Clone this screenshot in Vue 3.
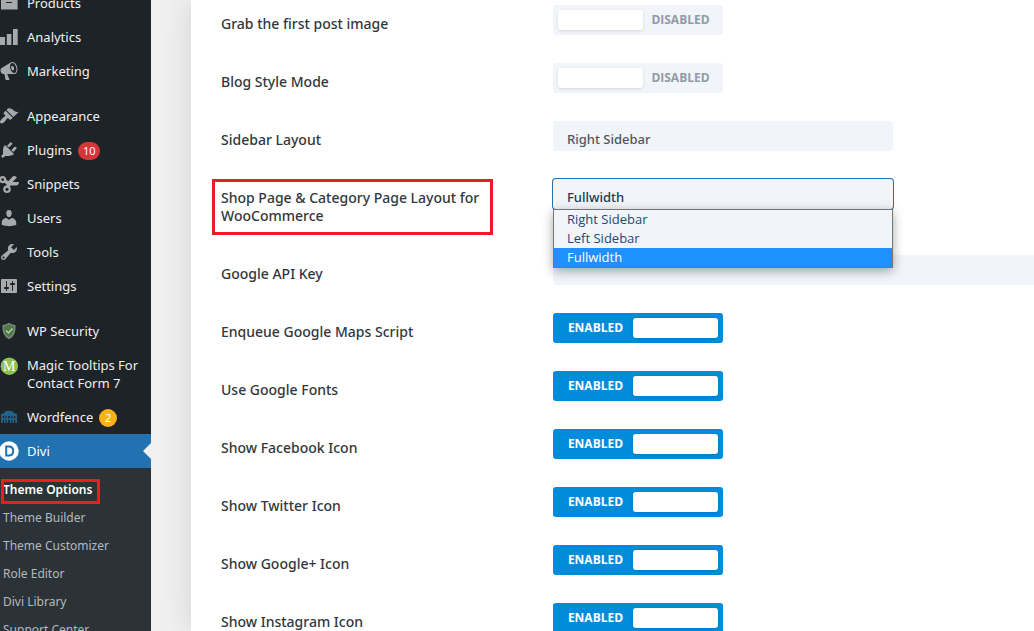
<script setup>
import { ref, reactive } from 'vue'

const icons = {
  products: 'M19 2v4H1V2h18zM2 6h16.600v10.500H2V6zm11 4V9H7v1h6z',
  analytics: 'M18.700 18V2h-4.700v16zM12.400 18V7H7.800v11zM6 18v-8H1v8z',
  marketing: 'M18.150 5.940c.46 1.620.38 3.220-.02 4.480-.42 1.280-1.260 2.180-2.300 2.480-.16.06-.26.06-.4.06-.06.02-.12.02-.18.02-.06.02-.14.02-.22.02h-6.800l2.220 5.500c.02.14-.06.26-.14.34-.08.1-.24.16-.34.16H6.950c-.1 0-.26-.06-.34-.16-.08-.08-.16-.2-.14-.34l-1-5.500H4.250l-.02-.02c-.5.06-1.080-.18-1.540-.62s-.88-1.080-1.060-1.880c-.24-.8-.2-1.560-.02-2.200.18-.62.58-1.080 1.060-1.300l.02-.02 9-5.400c.1-.06.18-.1.24-.16.06-.04.14-.08.24-.12.16-.08.28-.12.5-.18 1.040-.3 2.240.1 3.220.98s1.840 2.240 2.260 3.860zm-2.580 5.980h-.02c.4-.1.74-.34 1.040-.7.58-.7.86-1.760.86-3.040 0-.64-.1-1.300-.28-1.980-.34-1.360-1.020-2.500-1.780-3.240s-1.680-1.100-2.460-.88c-.82.22-1.400.96-1.700 2-.32 1.040-.28 2.360.06 3.720.38 1.360 1 2.500 1.800 3.240.78.74 1.620 1.100 2.480.88zm-2.540-7.080c.22-.04.42-.02.62.04.38.16.76.48 1.020 1s.42 1.200.42 1.780c0 .3-.04.56-.12.8-.18.48-.44.84-.86.94-.34.1-.8-.06-1.140-.4s-.64-.86-.78-1.500c-.18-.62-.12-1.240.02-1.720s.48-.84.82-.94z',
  appearance: 'M14.480 11.060L7.410 3.990l1.500-1.500c.5-.56 2.300-.47 3.510.32 1.210.8 1.430 1.280 2.910 2.100 1.180.64 2.450 1.260 4.450.85zm-.71.71L6.700 4.700 4.930 6.470c-.39.39-.39 1.020 0 1.410l1.060 1.060c.39.39.39 1.030 0 1.420-.6.6-1.430 1.110-2.210 1.690-.35.26-.7.53-1.010.84C1.430 14.230.4 16.080 1.400 17.070c.99 1 2.840-.03 4.180-1.360.31-.31.58-.66.85-1.020.57-.78 1.080-1.610 1.690-2.210.39-.39 1.020-.39 1.410 0l1.060 1.060c.39.39 1.020.39 1.410 0z',
  plugins: 'M13.110 4.360L9.870 7.600 8 5.730l3.240-3.240c.35-.34 1.050-.2 1.560.32.52.51.66 1.210.31 1.550zm-8 1.770l.91-1.120 9.010 9.010-1.190.84c-.71.71-2.630 1.160-3.820 1.160H6.140L4.900 17.260c-.59.59-1.540.59-2.120 0-.59-.58-.59-1.530 0-2.120l1.240-1.240v-3.880c0-1.130.4-3.190 1.090-3.890zm7.260 3.970l3.240-3.240c.34-.35 1.040-.21 1.550.31.52.51.66 1.210.31 1.550l-3.240 3.250z',
  users: 'M10 9.250c-2.270 0-2.730-3.440-2.730-3.440C7 4.020 7.820 2 9.970 2c2.160 0 2.980 2.020 2.710 3.810 0 0-.41 3.440-2.680 3.440zm0 2.570L12.720 10c2.390 0 4.520 2.330 4.520 4.530v2.490s-3.650 1.130-7.240 1.130c-3.650 0-7.240-1.130-7.240-1.130v-2.490c0-2.250 1.940-4.480 4.470-4.480z',
  tools: 'M16.680 9.770c-1.340 1.340-3.300 1.670-4.950.99l-5.410 6.520c-.99.99-2.590.99-3.580 0s-.99-2.590 0-3.570l6.520-5.420c-.68-1.650-.35-3.610.99-4.950 1.280-1.280 3.120-1.620 4.720-1.060l-2.890 2.890 2.820 2.820 2.860-2.870c.53 1.580.18 3.390-1.080 4.650zM3.810 16.210c.4.39 1.040.39 1.430 0 .4-.4.4-1.040 0-1.430-.39-.4-1.030-.4-1.430 0-.39.39-.39 1.030 0 1.430z',
  settings: 'M18 16V4c0-.55-.45-1-1-1H3c-.55 0-1 .45-1 1v12c0 .55.45 1 1 1h14c.55 0 1-.45 1-1zM8 11h1c.55 0 1 .45 1 1s-.45 1-1 1H8v1.500c0 .28-.22.5-.5.5s-.5-.22-.5-.5V13H6c-.55 0-1-.45-1-1s.45-1 1-1h1V5.500c0-.28.22-.5.5-.5s.5.22.5.5V11zm5-2h-1c-.55 0-1-.45-1-1s.45-1 1-1h1V5.500c0-.28.22-.5.5-.5s.5.22.5.5V7h1c.55 0 1 .45 1 1s-.45 1-1 1h-1v5.500c0 .28-.22.5-.5.5s-.5-.22-.5-.5V9z',
}

const menu = [
  { icon: 'products', label: 'Products' },
  { icon: 'analytics', label: 'Analytics' },
  { icon: 'marketing', label: 'Marketing' },
  { icon: 'appearance', label: 'Appearance', gap: true },
  { icon: 'plugins', label: 'Plugins', badge: '10' },
  { icon: 'snippets', label: 'Snippets' },
  { icon: 'users', label: 'Users' },
  { icon: 'tools', label: 'Tools' },
  { icon: 'settings', label: 'Settings' },
  { icon: 'security', label: 'WP Security', gap: true },
  { icon: 'magic', label: 'Magic Tooltips For Contact Form 7' },
  { icon: 'wordfence', label: 'Wordfence', badge: '2', amber: true },
  { icon: 'divi', label: 'Divi', active: true },
]

const submenu = ['Theme Options', 'Theme Builder', 'Theme Customizer', 'Role Editor', 'Divi Library', 'Support Center']

const layouts = ['Right Sidebar', 'Left Sidebar', 'Fullwidth']
const sidebarLayout = ref('Right Sidebar')
const shopLayout = ref('Fullwidth')
const apiKey = ref('')

const rows = reactive([
  { id: 'grab', label: 'Grab the first post image', type: 'toggle', on: false },
  { id: 'blog', label: 'Blog Style Mode', type: 'toggle', on: false },
  { id: 'sidebar', label: 'Sidebar Layout', type: 'select' },
  { id: 'shop', label: 'Shop Page & Category Page Layout for WooCommerce', type: 'open' },
  { id: 'api', label: 'Google API Key', type: 'text' },
  { id: 'maps', label: 'Enqueue Google Maps Script', type: 'toggle', on: true },
  { id: 'fonts', label: 'Use Google Fonts', type: 'toggle', on: true },
  { id: 'facebook', label: 'Show Facebook Icon', type: 'toggle', on: true },
  { id: 'twitter', label: 'Show Twitter Icon', type: 'toggle', on: true },
  { id: 'google', label: 'Show Google+ Icon', type: 'toggle', on: true },
  { id: 'instagram', label: 'Show Instagram Icon', type: 'toggle', on: true },
])
</script>

<template>
  <div class="page">
    <nav class="sidebar">
      <ul class="menu">
        <li v-for="m in menu" :key="m.label" :class="{ gap: m.gap }">
          <a href="#" class="item" :class="{ active: m.active }">
            <svg class="icon" viewBox="1 0 20 20" aria-hidden="true">
              <path v-if="icons[m.icon]" :d="icons[m.icon]" fill="#a7aaad" fill-rule="evenodd" />
              <g v-else-if="m.icon === 'snippets'" fill="none" stroke="#a7aaad">
                <circle cx="3.700" cy="5.600" r="2.500" stroke-width="2.200" />
                <circle cx="8" cy="15.300" r="2.700" stroke-width="2.200" />
                <path d="M4.500 8L9 11.500H18Q20 11 20 8H10L6.500 5z" fill="#a7aaad" stroke="none" />
                <path d="M6.800 13L8.500 8L14 2.200Q16.500 1.200 18 3.500L12 9.500L11 13z" fill="#a7aaad" stroke="none" />
              </g>
              <g v-else-if="m.icon === 'security'">
                <path d="M10 2.500C8 4 6 4.500 4.200 4.800C3.800 11 5 15 10 17.300C15 15 16.200 11 15.800 4.800C14 4.500 12 4 10 2.500z" fill="#4c7a3f" stroke="#7d8a8a" stroke-width="1.400" />
                <path d="M7 9.500L9.500 12L13.500 7.500" fill="none" stroke="#c5d3c0" stroke-width="1.200" />
              </g>
              <g v-else-if="m.icon === 'magic'">
                <circle cx="10.300" cy="11.200" r="8.700" fill="#8dc153" />
                <text x="10.300" y="15.700" text-anchor="middle" class="serif-mark">M</text>
              </g>
              <g v-else-if="m.icon === 'wordfence'" fill="#21638c">
                <path d="M2 7L5.500 6V4.800Q10 2.800 14.500 4.800V6L18 7V9H2z" />
                <path d="M2 9H3.800V16H2zM5 9H6.500V16H5zM7.600 9H9.200V16H7.600zM10.800 9H12.400V16H10.800zM13.500 9H15V16H13.500zM16.200 9H18V16H16.200zM2 11.500H18V13H2z" />
              </g>
              <g v-else>
                <circle cx="10" cy="10" r="9.700" fill="#fff" />
                <path d="M7.200 5.500H9.800C12.800 5.500 14.200 7.500 14.200 10S12.800 14.500 9.800 14.500H7.200z" fill="none" stroke="#2271b1" stroke-width="2" />
              </g>
            </svg>
            <span class="name">{{ m.label }}</span>
            <span v-if="m.badge" class="badge" :class="{ amber: m.amber }">{{ m.badge }}</span>
          </a>
        </li>
      </ul>
      <ul class="submenu">
        <li v-for="(s, i) in submenu" :key="s">
          <a href="#" :class="{ current: i === 0 }">{{ s }}</a>
        </li>
      </ul>
    </nav>

    <main class="panel">
      <div v-for="r in rows" :key="r.id" class="row">
        <label :for="r.id" :class="{ marked: r.type === 'open' }">{{ r.label }}</label>
        <div class="control">
          <button
            v-if="r.type === 'toggle'"
            :id="r.id"
            type="button"
            role="switch"
            class="toggle"
            :class="{ on: r.on }"
            :aria-checked="r.on"
            @click="r.on = !r.on"
          >
            <span class="state">{{ r.on ? 'ENABLED' : 'DISABLED' }}</span>
            <span class="knob"></span>
          </button>
          <select v-else-if="r.type === 'select'" :id="r.id" v-model="sidebarLayout" class="field">
            <option v-for="l in layouts" :key="l">{{ l }}</option>
          </select>
          <div v-else-if="r.type === 'open'" class="dropdown">
            <select :id="r.id" v-model="shopLayout" class="field focused">
              <option v-for="l in layouts" :key="l">{{ l }}</option>
            </select>
            <ul class="options" role="listbox" aria-label="Layout">
              <li
                v-for="l in layouts"
                :key="l"
                role="option"
                :aria-selected="l === shopLayout"
                :class="{ chosen: l === shopLayout }"
                @click="shopLayout = l"
              >{{ l }}</li>
            </ul>
          </div>
          <input v-else :id="r.id" v-model="apiKey" type="text" class="text" />
        </div>
      </div>
    </main>
  </div>
</template>

<style>
body {
  margin: 0;
  background: #f0f0f1;
}
</style>

<style scoped>
* {
  box-sizing: border-box;
}
.page {
  display: flex;
  height: 100vh;
  overflow: hidden;
  font-family: "Open Sans", "Noto Sans", sans-serif;
}
ul {
  list-style: none;
  margin: 0;
  padding: 0;
}
.sidebar {
  flex: 0 0 151px;
  background: #1d2327;
  overflow: hidden;
  font-family: "Noto Sans", "Open Sans", sans-serif;
}
.menu {
  margin-top: -14px;
}
.gap {
  margin-top: 11px;
}
.item {
  position: relative;
  display: flex;
  align-items: flex-start;
  padding: 8px 8px 8px 27px;
  color: #f0f0f1;
  font-size: 13px;
  line-height: 18px;
  text-decoration: none;
}
.icon {
  position: absolute;
  left: 0;
  top: 7px;
  width: 20px;
  height: 20px;
}
.serif-mark {
  font-family: "Liberation Serif", serif;
  font-size: 14px;
  fill: #fff;
}
.badge {
  min-width: 18px;
  height: 18px;
  margin: 1px 0 -1px 6px;
  padding: 0 5px;
  border-radius: 9px;
  background: #d63638;
  color: #fff;
  font-size: 11px;
  text-align: center;
}
.badge.amber {
  background: #fcb214;
}
.active {
  background: #2271b1;
  color: #fff;
}
.active::after {
  content: "";
  position: absolute;
  right: 0;
  top: 9px;
  border: 8px solid transparent;
  border-left: 0;
  border-right-color: #f0f0f1;
}
.submenu {
  height: 100%;
  padding: 8px 0 0 3px;
  background: #2c3338;
}
.submenu a {
  position: relative;
  display: block;
  width: max-content;
  color: #b4b9be;
  font-size: 12px;
  line-height: 28px;
  text-decoration: none;
}
.submenu .current {
  color: #fff;
  font-weight: 600;
}
.current::after {
  content: "";
  position: absolute;
  inset: 3px -8px 0 -2px;
  border: 3px solid #ed1c24;
}
.panel {
  flex: 1;
  min-width: 0;
  margin-left: 40px;
  padding: 5px 0 0 30px;
  background: #fff;
  box-shadow: 0 0 30px rgba(0, 0, 0, 0.12);
  clip-path: inset(0 0 0 -40px);
}
.row {
  display: grid;
  grid-template-columns: 270px 1fr;
  column-gap: 62px;
  padding-bottom: 30px;
}
.row label {
  position: relative;
  margin-top: 10px;
  color: #32373c;
  font: 500 14px/18px "Noto Sans", "Open Sans", sans-serif;
}
.marked::after {
  content: "";
  position: absolute;
  inset: -10px -2px -10px -9px;
  border: 3px solid #ed1c24;
}
.control {
  height: 28px;
}
.toggle {
  display: flex;
  flex-direction: row-reverse;
  align-items: center;
  justify-content: space-between;
  width: 170px;
  height: 30px;
  padding: 5px;
  border: 0;
  border-radius: 3px;
  background: #f1f4f9;
  color: #8f9ba5;
  font: bold 12px/18px "Open Sans", sans-serif;
}
.toggle.on {
  flex-direction: row;
  background: #008bdb;
  color: #fff;
}
.state {
  flex: 1;
  text-align: center;
}
.knob {
  width: 85px;
  height: 20px;
  border-radius: 3px;
  background: #fff;
  box-shadow: 0 1px 3px rgba(0, 0, 0, 0.12);
}
.field {
  appearance: none;
  display: block;
  width: 340px;
  height: 30px;
  margin: 0;
  padding: 10px 14px 4px;
  border: 0;
  border-radius: 3px;
  outline: 0;
  background: #f1f4f9;
  color: #50575e;
  font: 500 13px/16px "Noto Sans", "Open Sans", sans-serif;
}
.dropdown {
  position: relative;
  width: 340px;
}
.field.focused {
  color: #1d3a56;
  box-shadow: 0 0 0 1px #2271b1;
}
.options {
  position: absolute;
  z-index: 1;
  top: 30px;
  left: 0;
  right: 0;
  border: 1px solid #767676;
  background: #f1f4f9;
  color: #1d4a75;
  font-size: 13px;
  line-height: 19px;
  box-shadow: 0 3px 10px rgba(0, 0, 0, 0.35);
}
.options li {
  padding-left: 13px;
}
.options .chosen {
  background: #1e90ff;
  color: #fff;
}
.text {
  display: block;
  width: 100%;
  height: 30px;
  padding: 0 14px;
  border: 0;
  border-radius: 3px 0 0 3px;
  background: #f1f4f9;
  font: 13px/16px "Open Sans", sans-serif;
}
</style>
